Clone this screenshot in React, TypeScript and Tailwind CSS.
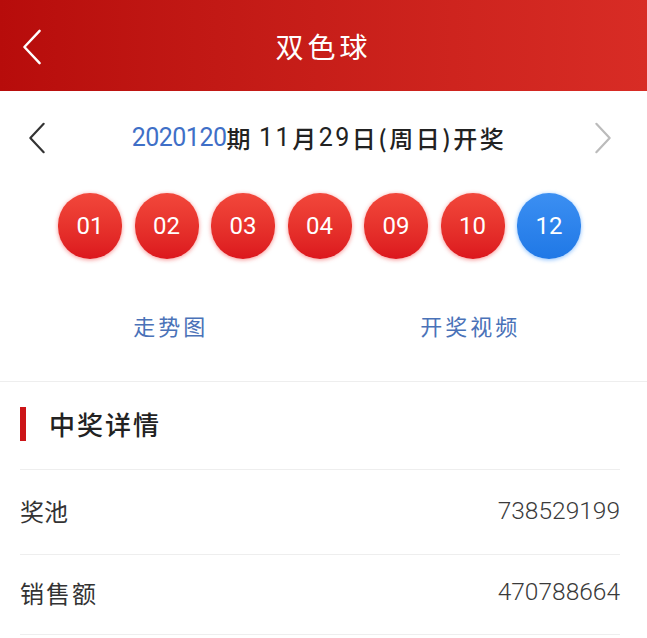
const CJK = "font-['Noto_Sans_CJK_SC',sans-serif]";

function Chevron({ dir, className }: { dir: "left" | "right"; className: string }) {
  return (
    <svg viewBox="0 0 24 40" className={className} fill="none" stroke="currentColor" strokeWidth="2.6" strokeLinecap="round" strokeLinejoin="round">
      {dir === "left" ? <path d="M20 3 L4 20 L20 37" /> : <path d="M4 3 L20 20 L4 37" />}
    </svg>
  );
}

const reds = ["01", "02", "03", "04", "09", "10"];

function Ball({ n, blue }: { n: string; blue?: boolean }) {
  return (
    <div
      className={
        "w-16 h-[66px] rounded-full flex items-center justify-center text-white text-[24px] font-['Roboto',sans-serif] " +
        (blue
          ? "bg-gradient-to-b from-[#3b8ff2] to-[#1f78e6] shadow-[0_1px_4px_rgba(60,150,255,0.6)]"
          : "bg-gradient-to-b from-[#f2473b] to-[#dc161d] shadow-[0_1px_4px_rgba(240,60,60,0.55)]")
      }
    >
      {n}
    </div>
  );
}

export default function App() {
  return (
    <div className={"w-[647px] h-[638px] bg-white overflow-hidden " + CJK}>
      {/* header */}
      <header className="h-[91px] relative flex items-center justify-center bg-gradient-to-r from-[#b70c0b] to-[#d82c25]">
        <Chevron dir="left" className="absolute left-[20px] top-[28px] w-[24px] h-[38px] text-white" />
        <h1 className="text-white text-[28px] tracking-[4px]">双色球</h1>
      </header>

      {/* issue */}
      <div className="h-[92px] flex items-center justify-between pl-[27px] pr-[34px] pt-[2px]">
        <Chevron dir="left" className="w-[20px] h-[38px] text-[#333]" />
        <div className="text-[24px] text-[#222] font-medium flex items-center tracking-[2.5px] mr-[2px]">
          <span className="text-[#3f6fc7] font-['Roboto',sans-serif] font-normal text-[25px] tracking-[-0.5px]">2020120</span>
          <span>期</span>
          <span className="ml-[6px] font-['Roboto',sans-serif] font-normal text-[25px]">11</span>
          <span>月</span>
          <span className="font-['Roboto',sans-serif] font-normal text-[25px]">29</span>
          <span>日(周日)开奖</span>
        </div>
        <Chevron dir="right" className="w-[20px] h-[38px] text-[#bbb]" />
      </div>

      {/* balls */}
      <div className="flex justify-center gap-[12.5px] mt-[10px] pr-[8px]">
        {reds.map((n) => (
          <Ball key={n} n={n} />
        ))}
        <Ball n="12" blue />
      </div>

      {/* links */}
      <div className="flex h-[122px] items-center pt-[10px]">
        <div className="w-1/2 flex justify-center pl-[18px]">
          <span className="text-[22px] text-[#4a72b8] tracking-[3px]">走势图</span>
        </div>
        <div className="w-1/2 flex justify-center pr-[30px]">
          <span className="text-[22px] text-[#4a72b8] tracking-[3px]">开奖视频</span>
        </div>
      </div>

      <div className="h-px bg-[#eeeeee]" />

      {/* detail */}
      <div className="pl-[20px] pr-[27px]">
        <div className="h-[87px] flex items-center pb-[4px]">
          <div className="w-[6px] h-[34px] bg-[#cc1518]" />
          <h2 className="ml-[23px] text-[26px] text-[#222] font-medium tracking-[2px]">中奖详情</h2>
        </div>
        <div className="h-px bg-[#eeeeee]" />
        <div className="h-[84px] flex items-center justify-between pb-[2px]">
          <span className="text-[24px] text-[#333]">奖池</span>
          <span className="text-[24.5px] text-[#3a3a3a] font-['Roboto',sans-serif] font-light">738529199</span>
        </div>
        <div className="h-px bg-[#eeeeee]" />
        <div className="h-[79px] flex items-center justify-between pb-[4px]">
          <span className="text-[24px] text-[#333] tracking-[2px]">销售额</span>
          <span className="text-[24.5px] text-[#3a3a3a] font-['Roboto',sans-serif] font-light">470788664</span>
        </div>
        <div className="h-px bg-[#eeeeee]" />
      </div>
    </div>
  );
}
